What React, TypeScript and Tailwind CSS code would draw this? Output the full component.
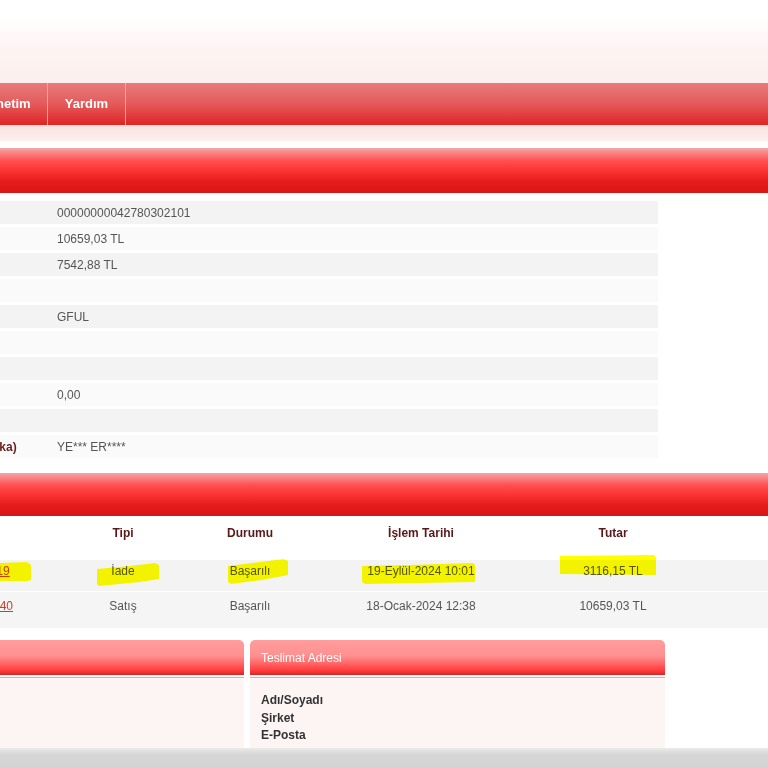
import React from "react";

const infoRows = [
  { label: "Sipariş No", value: "00000000042780302101" },
  { label: "Tutar", value: "10659,03 TL" },
  { label: "Kalan Tutar", value: "7542,88 TL" },
  { label: "Taksit", value: "" },
  { label: "Firma Kodu", value: "GFUL" },
  { label: "Açıklama", value: "" },
  { label: "Referans", value: "" },
  { label: "Komisyon", value: "0,00" },
  { label: "Kart No", value: "" },
  { label: "Kart Sahibi (Banka)", value: "YE*** ER****" },
];

const cols = ["w-[154px]", "w-[146px]", "w-[108px]", "w-[234px]", "w-[150px]", "w-[206px]"];

const txRows = [
  { no: "62740198319", tip: "İade", durum: "Başarılı", tarih: "19-Eylül-2024 10:01", tutar: "3116,15 TL", h: "h-[31px] pt-[4px] bg-[#f3f3f3]" },
  { no: "627401983240", tip: "Satış", durum: "Başarılı", tarih: "18-Ocak-2024 12:38", tutar: "10659,03 TL", h: "h-[36px] pt-[7px] bg-[#f5f5f5] mt-[1px]" },
];

const redBar = "bg-[linear-gradient(to_bottom,#f4a6a6_0%,#ff5050_28%,#fc3434_50%,#e41c1c_75%,#d91515_100%)]";
const panelHead = "bg-[linear-gradient(to_bottom,#ff9d9d_0%,#ff9090_45%,#ff6a6a_65%,#ff3a3a_88%,#d82424_100%)]";

export default function App() {
  return (
    <div className="w-full h-[768px] flex flex-col overflow-hidden bg-white font-['Liberation_Sans',Arial,sans-serif] text-[12px] text-[#555]">
      <div className="relative flex-1 overflow-hidden">
        <div className="-ml-[200px] w-[1168px] flex flex-col">
          {/* top header */}
          <div className="h-[83px] bg-[linear-gradient(to_bottom,#ffffff_0%,#ffffff_20%,#fdf4f2_60%,#fcefed_100%)]" />
          {/* nav */}
          <div className="h-[42px] flex bg-[linear-gradient(to_bottom,#e87b7b_0%,#e45a5a_50%,#e02424_100%)] text-white font-bold text-[13px]">
            <div className="w-[20px]" />
            <div className="w-[70px] flex items-center justify-center border-r border-[#f1a3a3]">Ana Sayfa</div>
            <div className="w-[73px] flex items-center justify-center border-r border-[#f1a3a3]">İşlem</div>
            <div className="w-[85px] flex items-center justify-center border-r border-[#f1a3a3]">Yönetim</div>
            <div className="w-[78px] flex items-center justify-center border-r border-[#f1a3a3]">Yardım</div>
          </div>
          <div className="h-[16px] bg-[linear-gradient(to_bottom,#fae2de,#fcefec)]" />
          <div className="h-[7px] bg-white" />
          <div className={`h-[45px] ${redBar} flex items-center pl-[30px] text-white font-bold`}>Sipariş</div>

          {/* info rows */}
          <div className="mt-[8px] ml-[96px] w-[762px] flex flex-col gap-[3px]">
            {infoRows.map((r, i) => (
              <div key={i} className={`h-[23px] flex items-center ${i % 2 === 0 ? "bg-[#f3f3f3]" : "bg-[#fafafa]"}`}>
                <div className="w-[161px] pl-[10px] font-bold text-[#6b1d1d] whitespace-nowrap">{r.label}</div>
                <div className="whitespace-nowrap">{r.value}</div>
              </div>
            ))}
          </div>

          <div className={`mt-[15px] h-[43px] ${redBar} flex items-center pl-[30px] text-white font-bold`}>İşlemler</div>

          {/* transactions table */}
          <div className="ml-[96px] w-[998px] flex flex-col">
            <div className="h-[44px] flex items-start pt-[10px] font-bold text-[#5a1818] leading-[14px]">
              <div className={`${cols[0]} text-center`}>İşlem No</div>
              <div className={`${cols[1]} text-center`}>Tipi</div>
              <div className={`${cols[2]} text-center`}>Durumu</div>
              <div className={`${cols[3]} text-center`}>İşlem Tarihi</div>
              <div className={`${cols[4]} text-center`}>Tutar</div>
              <div className={`${cols[5]} text-center`}>İşlemler</div>
            </div>
            {txRows.map((r, i) => (
              <div key={i} className={`flex items-start leading-[14px] ${r.h}`}>
                <div className={`${cols[0]} text-center`}>
                  <span className="text-[#d23a2a] underline">{r.no}</span>
                </div>
                <div className={`${cols[1]} text-center`}>{r.tip}</div>
                <div className={`${cols[2]} text-center`}>{r.durum}</div>
                <div className={`${cols[3]} text-center`}>{r.tarih}</div>
                <div className={`${cols[4]} text-center`}>{r.tutar}</div>
                <div className={`${cols[5]} text-center`} />
              </div>
            ))}
          </div>

          {/* bottom panels */}
          <div className="mt-[12px] ml-[96px] flex gap-[6px]">
            <div className="w-[348px] flex flex-col">
              <div className={`h-[35px] ${panelHead} rounded-tr-[5px] flex items-center pl-[11px] text-white`}>Fatura Adresi</div>
              <div className="h-[2px] bg-white" />
              <div className="h-[1px] bg-[#f2a6a6]" />
              <div className="h-[120px] bg-[#fdf4f4]" />
            </div>
            <div className="w-[415px] flex flex-col">
              <div className={`h-[35px] ${panelHead} rounded-t-[5px] flex items-center pl-[11px] text-white`}>Teslimat Adresi</div>
              <div className="h-[2px] bg-white" />
              <div className="h-[1px] bg-[#f2a6a6]" />
              <div className="bg-[#fdf4f4] pt-[14px] pl-[11px] pb-[60px] font-bold text-[#333] leading-[17.5px]">
                <div>Adı/Soyadı</div>
                <div>Şirket</div>
                <div>E-Posta</div>
              </div>
            </div>
          </div>
        </div>

        {/* highlighter marks */}
        <svg className="absolute left-0 top-0 pointer-events-none mix-blend-multiply" width="768" height="748" viewBox="0 0 768 748">
          <g fill="#ffff00">
            <polygon points="0,563 27,562 31,565 31,580 27,581 0,581" />
            <polygon points="97,569 130,566 155,563 159,565 159,579 140,582 99,586 97,584" />
            <polygon points="228,566 260,562 284,559 288,561 288,575 262,580 231,584 228,582" />
            <polygon points="362,566 410,565 473,563 475,565 475,582 420,583 365,584 362,582" />
            <polygon points="560,556 654,555 656,557 656,575 560,574" />
          </g>
        </svg>
      </div>
      <div className="h-[20px] bg-[linear-gradient(to_bottom,#ebebeb_0%,#d6d6d6_30%,#d3d3d3_100%)]" />
    </div>
  );
}
